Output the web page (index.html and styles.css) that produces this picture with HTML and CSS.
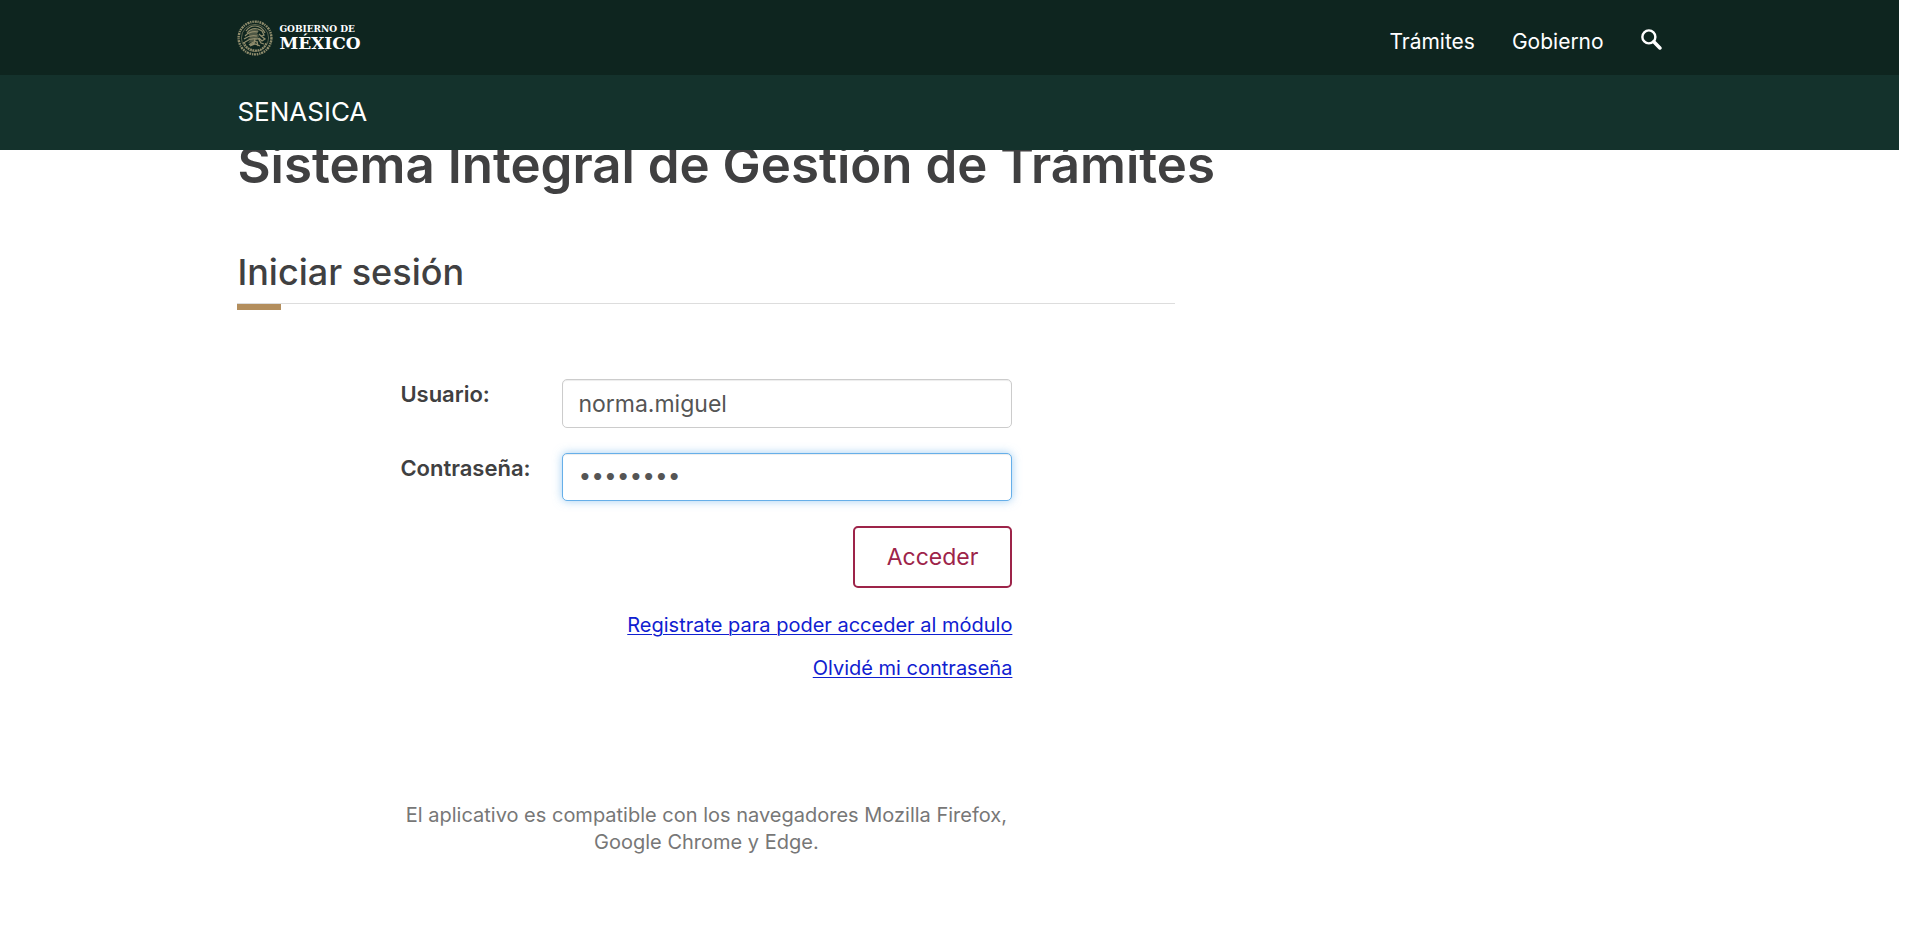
FILE: index.html
```html
<!DOCTYPE html>
<html lang="es">
<head>
<meta charset="utf-8">
<title>SENASICA - Iniciar sesión</title>
<link rel="stylesheet" href="styles.css">
</head>
<body>
<header class="site-header">
  <div class="topbar">
    <div class="container topbar-inner">
      <a class="brand" href="#">
        <svg class="brand-seal" viewBox="0 0 36 36" aria-hidden="true">
          <g fill="none" stroke="#8f8c6c">
            <circle cx="18" cy="18" r="16.4" stroke-width="2.4" stroke-dasharray="1.6 .8 2.2 .7 1.2 .9"/>
            <circle cx="18" cy="18" r="13.6" stroke-width=".6"/>
            <path d="M7 22c1 5 5 8 11 8.500s10-3 11.500-8" stroke-width="2.200" stroke-dasharray="1.800 .7"/>
            <path d="M9 11c2-3 5-5 9-5s8 3 10 7M10 13c3-4 7-5 11-4M8 16c3-3 8-5 13-4M7 19c4-3 9-4 13-3M8 22c4-3 9-4 13-3M12 25c3-3 6-4 9-3" stroke-width="1.200"/>
            <path d="M21 9l4 2 2 4-3 1-2-2M24 16l4 3-3 2-3-3M21 18l3 5 3 1M18 19l-1 4-4 2M20 22l1 4M13 26l5-2 5 2" stroke-width="1.300"/>
          </g>
          <path d="M11 13c3-4 8-5 11-2l-2 2 2 3-2 4-4 2-5 1 3-4-4 1 3-3z" fill="#8f8c6c" opacity=".5"/>
        </svg>
        <span class="brand-text">
          <span class="brand-small">GOBIERNO DE</span>
          <span class="brand-large">MÉXICO</span>
        </span>
      </a>
      <nav class="topnav" aria-label="Principal">
        <a href="#">Trámites</a>
        <a href="#">Gobierno</a>
        <a class="search-link" href="#" aria-label="Buscar">
          <svg viewBox="0 0 20 20" fill="none" stroke="#fff">
            <circle cx="7.500" cy="7.500" r="6.200" stroke-width="2.300"/>
            <path d="M12.200 12.200l5.800 5.800" stroke-width="3.400" stroke-linecap="round"/>
          </svg>
        </a>
      </nav>
    </div>
  </div>
  <div class="subbar">
    <div class="container"><a class="subbar-link" href="#">SENASICA</a></div>
  </div>
</header>
<main class="page">
  <div class="container">
    <h1>Sistema Integral de Gestión de Trámites</h1>
    <section class="login">
      <h2>Iniciar sesión</h2>
      <form class="login-form">
        <div class="field">
          <label for="usuario">Usuario:</label>
          <input id="usuario" type="text" value="norma.miguel">
        </div>
        <div class="field">
          <label for="contrasena">Contraseña:</label>
          <input id="contrasena" class="active" type="password" value="abcdefgh">
        </div>
        <div class="actions">
          <button type="button">Acceder</button>
          <a href="#">Registrate para poder acceder al módulo</a>
          <a href="#">Olvidé mi contraseña</a>
        </div>
        <p class="note">El aplicativo es compatible con los navegadores Mozilla Firefox, Google Chrome y Edge.</p>
      </form>
    </section>
  </div>
</main>
</body>
</html>
```
FILE: styles.css
```css
* { box-sizing: border-box; }
body {
  margin: 0;
  padding-right: 21px;
  background: #fff;
  color: #404041;
  font-family: Inter, "Open Sans", sans-serif;
  font-size: 20px;
  line-height: 27px;
}
.container { width: 75%; margin: 0 auto; }
.site-header { position: relative; z-index: 2; }
.topbar { background: #0e251f; }
.topbar-inner {
  display: flex;
  justify-content: space-between;
  align-items: center;
  height: 75px;
}
.brand { display: flex; align-items: center; gap: 6px; color: #fff; text-decoration: none; }
.brand-seal { width: 36px; height: 36px; }
.brand-text {
  display: flex;
  flex-direction: column;
  font-family: "DejaVu Serif", serif;
  font-weight: 700;
}
.brand-small { font-size: 9px; line-height: 12px; }
.brand-large { font-size: 17px; line-height: 17px; }
.topnav { display: flex; align-items: center; gap: 37px; padding-top: 7px; }
.topnav a { color: #fff; font-size: 21px; text-decoration: none; }
.topnav .search-link { padding-bottom: 4px; }
.search-link svg { display: block; width: 21px; height: 21px; }
.subbar { background: #14322c; padding: 22px 0 23px; }
.subbar-link { display: block; color: #fff; font-size: 26px; line-height: 30px; text-decoration: none; }
h1 {
  margin: -15px 0 0;
  font-size: 51px;
  line-height: 60px;
  font-weight: 600;
  white-space: nowrap;
}
.login { width: 65.8%; }
h2 {
  position: relative;
  margin: 55px 0 75px;
  padding-bottom: 8px;
  border-bottom: 1px solid #ddd;
  font-size: 36px;
  line-height: 45px;
  font-weight: 500;
}
h2::after {
  content: "";
  position: absolute;
  top: 100%;
  left: 0;
  width: 44px;
  height: 6px;
  margin-top: 1px;
  background: #b38e5d;
}
.login-form { max-width: 775px; padding-left: 163px; }
.field { display: grid; grid-template-columns: 162px 1fr; margin-bottom: 25px; }
.field label { padding-top: 2px; font-size: 22px; font-weight: 600; }
.field input {
  width: 100%;
  height: 49px;
  padding: 8px 15px;
  border: 1px solid #ccc;
  border-radius: 5px;
  box-shadow: inset 0 1px 1px rgba(0, 0, 0, .075);
  color: #555;
  background: #fff;
  font-family: inherit;
  font-size: 23px;
  outline: 0;
}
.field input[type="password"] {
  height: 48px;
  font-family: "DejaVu Sans", sans-serif;
  font-size: 20px;
  font-weight: 700;
}
.field input.active {
  border-color: #66afe9;
  box-shadow: inset 0 1px 1px rgba(0, 0, 0, .075), 0 0 10px rgba(102, 175, 233, .6);
}
.actions { display: flex; flex-direction: column; align-items: flex-end; gap: 16px; }
.actions button {
  height: 62px;
  margin-bottom: 8px;
  padding: 0 32px;
  border: 2px solid #9d2449;
  border-radius: 5px;
  background: #fff;
  color: #9d2449;
  font-family: inherit;
  font-size: 23px;
}
.actions a { color: #1020d0; text-decoration-thickness: 1px; text-underline-offset: 2px; }
.note { margin: 120px 0 0; text-align: center; color: #777; }
```
